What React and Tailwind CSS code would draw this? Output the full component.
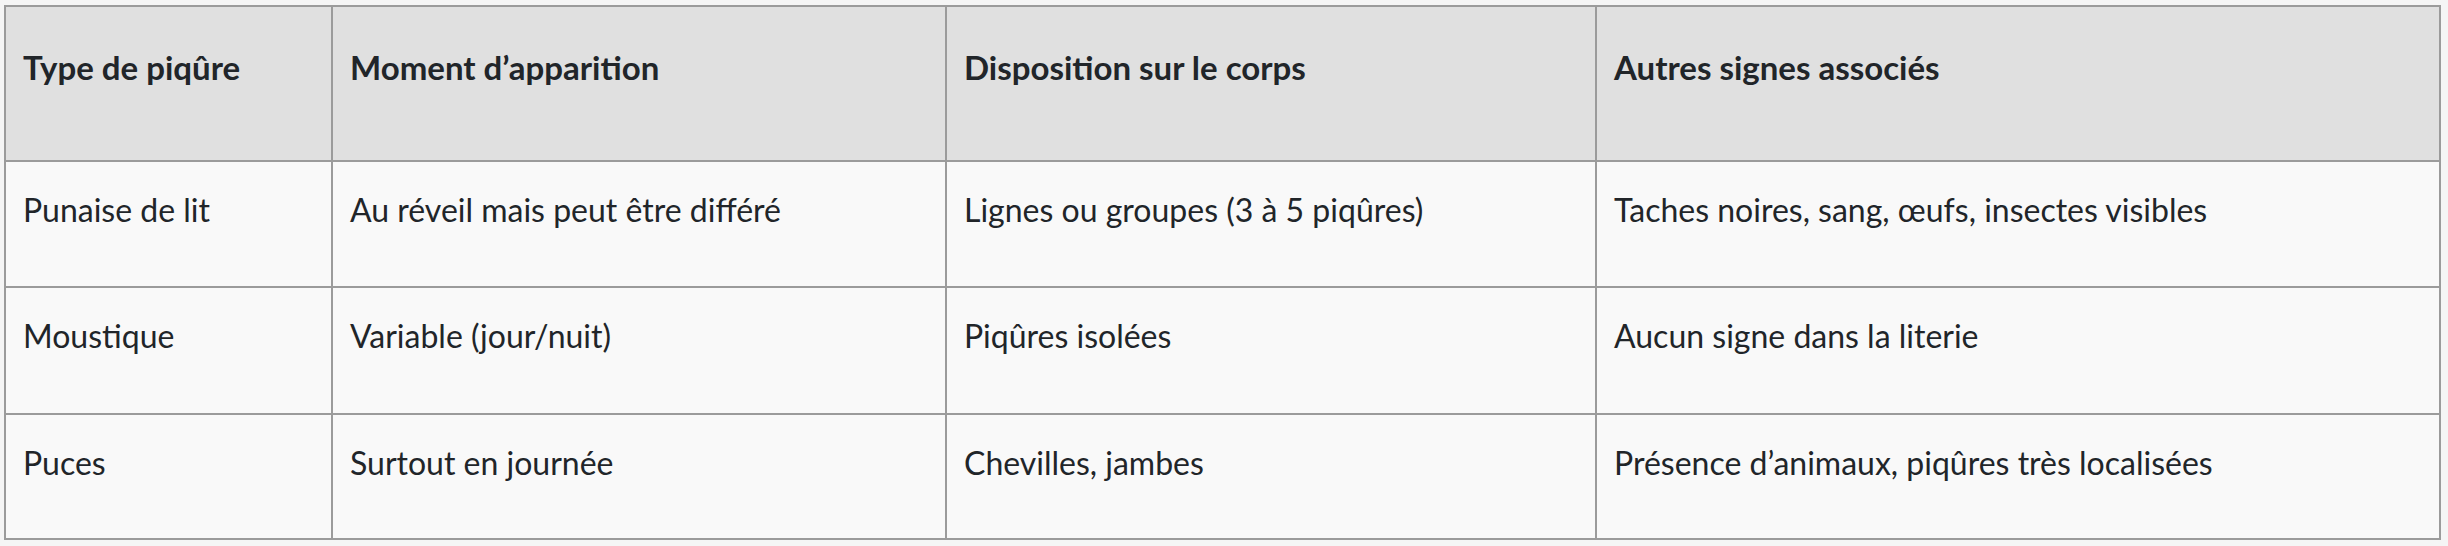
import React from "react";

const headers = [
  "Type de piqûre",
  "Moment d’apparition",
  "Disposition sur le corps",
  "Autres signes associés",
];

const rows = [
  {
    h: "h-[124px]",
    cells: [
      "Punaise de lit",
      "Au réveil mais peut être différé",
      "Lignes ou groupes (3 à 5 piqûres)",
      "Taches noires, sang, œufs, insectes visibles",
    ],
  },
  {
    h: "h-[125px]",
    cells: [
      "Moustique",
      "Variable (jour/nuit)",
      "Piqûres isolées",
      "Aucun signe dans la literie",
    ],
  },
  {
    h: "h-[123px]",
    cells: [
      "Puces",
      "Surtout en journée",
      "Chevilles, jambes",
      "Présence d’animaux, piqûres très localisées",
    ],
  },
];

export default function App() {
  return (
    <div
      className="min-h-screen bg-[#f5f5f5] pt-[5px] pl-[4px] text-[#212529]"
      style={{ fontFamily: "Lato, 'Open Sans', sans-serif" }}
    >
      {/* gap + bg trick draws the 2px grid lines */}
      <div className="grid w-[2437px] grid-cols-[325px_612px_648px_842px] gap-[2px] bg-[#9b9b9b] p-[2px]">
        {headers.map((title) => (
          <div
            key={title}
            className="h-[153px] bg-[#e0e0e0] pl-[17px] pt-[36px] text-[33px] font-bold leading-[1.5]"
          >
            {title}
          </div>
        ))}
        {rows.map((row) =>
          row.cells.map((text) => (
            <div
              key={text}
              className={`${row.h} bg-[#f9f9f9] pl-[17px] pt-[24px] text-[32px] leading-[1.5]`}
            >
              {text}
            </div>
          )),
        )}
      </div>
    </div>
  );
}
